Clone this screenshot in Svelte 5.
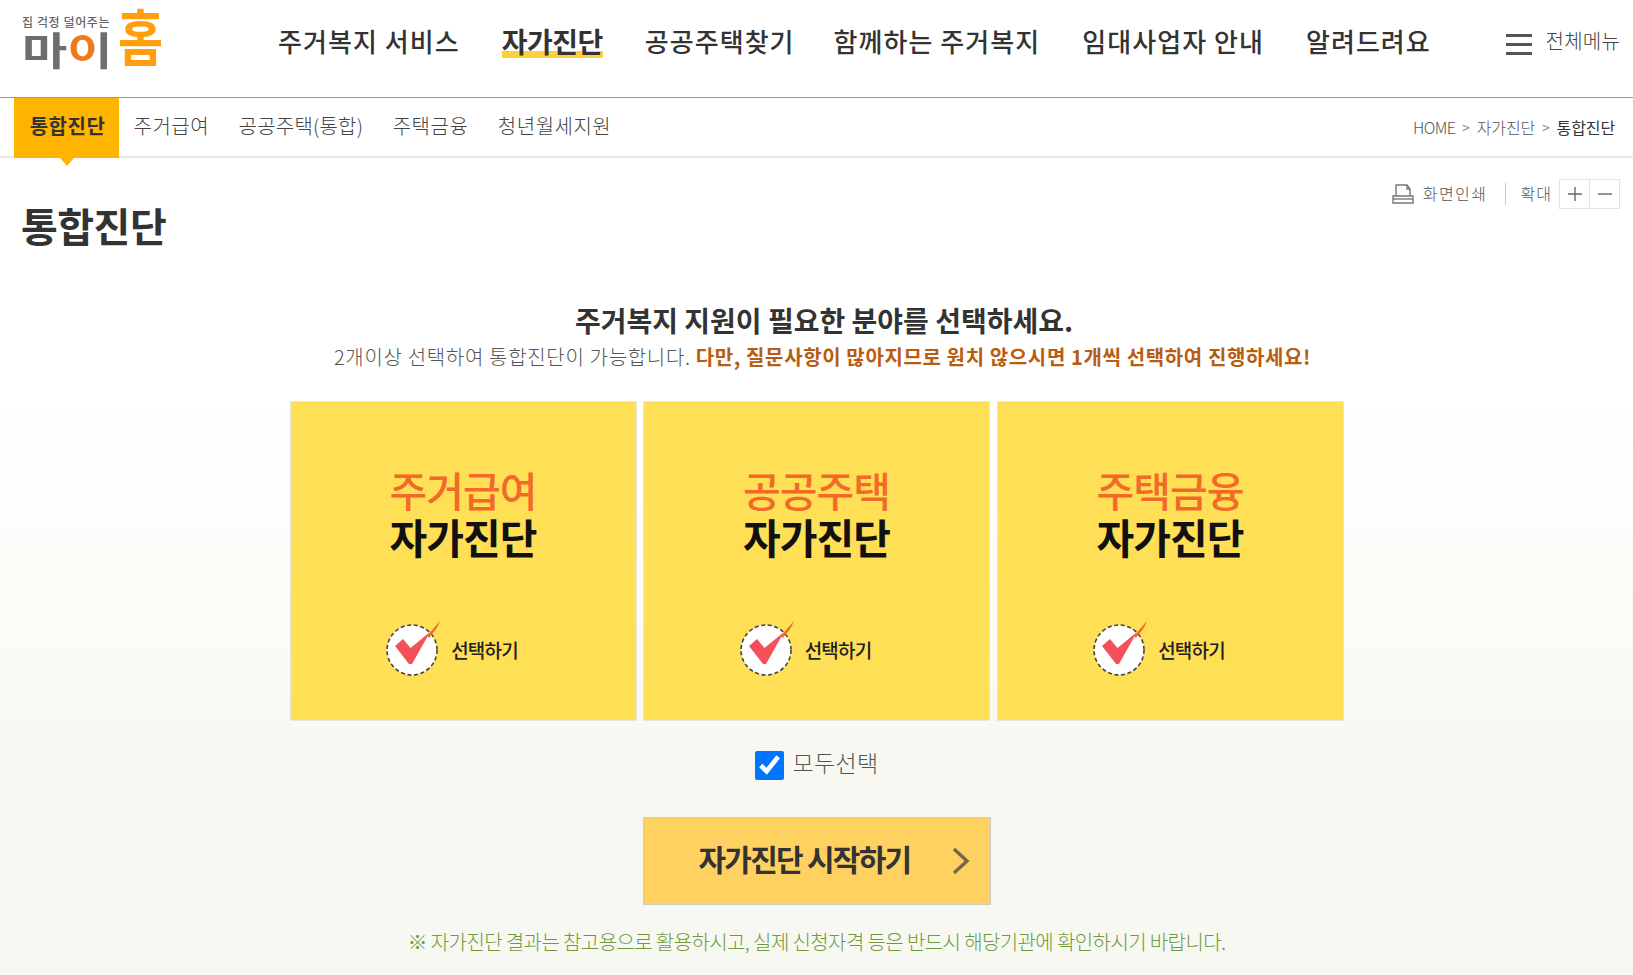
<script lang="ts">
  const mainNav = ['주거복지 서비스', '자가진단', '공공주택찾기', '함께하는 주거복지', '임대사업자 안내', '알려드려요'];
  const subNav = ['통합진단', '주거급여', '공공주택(통합)', '주택금융', '청년월세지원'];
  const cards = ['주거급여', '공공주택', '주택금융'];
</script>

<header class="top">
  <a class="logo" href="#top">
    <span class="logo-left">
      <span class="slogan">집 걱정 덜어주는</span>
      <span class="my">마<span class="ring">이</span></span>
    </span>
    <span class="home">홈</span>
  </a>
  <nav class="gnb">
    {#each mainNav as item, i}
      <a href="#top" class:on={i === 1}>{item}</a>
    {/each}
  </nav>
  <div class="all">
    <span class="burger"><i></i><i></i><i></i></span>
    <span>전체메뉴</span>
  </div>
</header>

<div class="subbar">
  <nav class="lnb">
    {#each subNav as item, i}
      <a href="#top" class:active={i === 0}>{item}</a>
    {/each}
  </nav>
  <div class="crumbs">
    <span class="en">HOME</span><span class="sep">&gt;</span><span>자가진단</span><span class="sep">&gt;</span><b>통합진단</b>
  </div>
</div>

<main>
  <div class="head">
    <h1>통합진단</h1>
    <div class="tools">
      <svg width="22" height="20" viewBox="0 0 22 20" fill="none" stroke="#777" stroke-width="1.4">
        <path d="M4 12V1h11l3 4v7" />
        <path d="M15 1v4h3" />
        <path d="M1 12h20v7H1z" />
        <path d="M1 15h20" />
      </svg>
      <span class="print">화면인쇄</span>
      <span class="bar"></span>
      <span class="zoom-label">확대</span>
      <span class="zoom-btns">
        <button aria-label="확대">
          <svg width="16" height="16" viewBox="0 0 16 16" stroke="#666" stroke-width="1.4"><path d="M8 1v14M1 8h14" /></svg>
        </button>
        <button aria-label="축소">
          <svg width="16" height="16" viewBox="0 0 16 16" stroke="#666" stroke-width="1.4"><path d="M1 8h14" /></svg>
        </button>
      </span>
    </div>
  </div>

  <section class="intro">
    <h2>주거복지 지원이 필요한 분야를 선택하세요.</h2>
    <p>2개이상 선택하여 통합진단이 가능합니다. <strong>다만, 질문사항이 많아지므로 원치 않으시면 1개씩 선택하여 진행하세요!</strong></p>
  </section>

  <div class="cards">
    {#each cards as name}
      <div class="card">
        <div class="card-title">
          <span class="orange">{name}</span>
          <span class="black">자가진단</span>
        </div>
        <div class="pick">
          <svg width="54" height="58" viewBox="0 0 54 58">
            <circle cx="26" cy="31" r="25" fill="#fff" stroke="#444" stroke-width="1.6" stroke-dasharray="4 2.6" />
            <g class="tick">
              <path d="M9 27l8-7 7.500 9L44 13 26 45h-3z" fill="#f4505a" />
              <path d="M41 17L54 2q-3 8-8 13l-3 4z" fill="#f26a1f" />
            </g>
          </svg>
          <span class="pick-label">선택하기</span>
        </div>
      </div>
    {/each}
  </div>

  <label class="all-check">
    <input type="checkbox" checked />
    <span>모두선택</span>
  </label>

  <button class="start">
    <span class="start-label">자가진단 시작하기</span>
    <svg width="18" height="28" viewBox="0 0 18 28" fill="none" stroke="#77664a" stroke-width="3.4"><path d="M2 2l13 12L2 26" /></svg>
  </button>

  <p class="note">※ 자가진단 결과는 참고용으로 활용하시고, 실제 신청자격 등은 반드시 해당기관에 확인하시기 바랍니다.</p>
</main>

<style>
  :global(body) {
    margin: 0;
    background: linear-gradient(#fff 400px, #f8f8f2 760px);
    min-height: 975px;
    overflow: hidden;
    font-family: "Noto Sans CJK KR", "Noto Sans", sans-serif;
    color: #333;
  }
  a {
    color: inherit;
    text-decoration: none;
  }
  .top {
    height: 97px;
    display: flex;
    align-items: flex-start;
    border-bottom: 1px solid #999;
    box-sizing: content-box;
  }
  .logo {
    display: flex;
    margin-left: 22px;
    width: 240px;
    height: 97px;
  }
  .logo-left {
    display: flex;
    flex-direction: column;
    padding-top: 15px;
  }
  .slogan {
    font-size: 12px;
    line-height: 14px;
    font-weight: 500;
    color: #666;
    letter-spacing: 0.6px;
    white-space: nowrap;
  }
  .my {
    margin-top: -1px;
    font-size: 39px;
    line-height: 40px;
    font-weight: 700;
    color: #6e6e6e;
    transform: scaleX(1.26);
    transform-origin: 0 50%;
  }
  .ring {
    background: linear-gradient(90deg, #ee7a1b 58%, #6e6e6e 58%);
    -webkit-background-clip: text;
    background-clip: text;
    color: transparent;
  }
  .home {
    font-size: 49px;
    line-height: 72px;
    font-weight: 700;
    color: #ff9f0f;
    margin: -3px 0 0 8px;
    height: 72px;
    transform: scaleY(1.25);
    transform-origin: 50% 40%;
  }
  .gnb {
    display: flex;
    gap: 42px;
    margin-left: 16px;
    padding-top: 21px;
    white-space: nowrap;
  }
  .gnb a {
    font-size: 26px;
    line-height: 40px;
    font-weight: 500;
    color: #333;
    letter-spacing: 1.05px;
  }
  .gnb a.on {
    font-size: 28px;
    font-weight: 700;
    letter-spacing: -0.5px;
    background: linear-gradient(transparent 30px, #fdd13a 30px, #fdd13a 37px, transparent 37px);
  }
  .gnb a:nth-child(3) {
    margin-right: -3px;
  }
  .all {
    display: flex;
    align-items: center;
    gap: 14px;
    margin-left: auto;
    margin-right: 13px;
    padding-top: 21px;
    font-size: 20px;
    line-height: 40px;
    font-weight: 300;
    color: #444;
    letter-spacing: 0.2px;
  }
  .burger {
    display: flex;
    flex-direction: column;
    gap: 6px;
    margin-top: 6px;
  }
  .burger i {
    display: block;
    width: 26px;
    height: 3px;
    background: #555;
  }
  .subbar {
    height: 60px;
    display: flex;
    justify-content: space-between;
    border-bottom: 2px solid #e8e8e8;
    box-sizing: border-box;
    padding: 0 18px 0 14px;
  }
  .lnb {
    display: flex;
    gap: 29.5px;
  }
  .lnb a {
    font-size: 20px;
    line-height: 56px;
    color: #444;
    font-weight: 300;
    letter-spacing: 0.5px;
    white-space: nowrap;
  }
  .lnb a:nth-child(3) {
    letter-spacing: 0.2px;
  }
  .lnb a.active {
    position: relative;
    box-sizing: border-box;
    width: 105px;
    height: 60px;
    margin-right: -15px;
    padding-left: 2px;
    text-align: center;
    background: #ffb400;
    font-weight: 700;
    color: #333;
    letter-spacing: 0.5px;
  }
  .lnb a.active::after {
    content: "";
    position: absolute;
    left: 46px;
    top: 60px;
    border: 7px solid transparent;
    border-top: 8px solid #ffb400;
    border-bottom: 0;
  }
  .crumbs {
    display: flex;
    align-items: center;
    font-size: 16px;
    font-weight: 300;
    color: #555;
    letter-spacing: -0.1px;
    white-space: nowrap;
  }
  .crumbs .en {
    letter-spacing: -0.6px;
  }
  .crumbs .sep {
    margin: 0 7px;
    font-size: 14px;
  }
  .crumbs b {
    font-weight: 400;
    color: #333;
  }
  main {
    display: flex;
    flex-direction: column;
    align-items: center;
  }
  .head {
    align-self: stretch;
    height: 142px;
    display: flex;
    justify-content: space-between;
    align-items: flex-start;
    padding: 0 13px 0 21px;
  }
  h1 {
    margin: 40px 0 0;
    font-size: 40px;
    line-height: 54px;
    font-weight: 700;
    letter-spacing: -0.5px;
    color: #333;
  }
  .tools {
    display: flex;
    align-items: center;
    margin-top: 21px;
    font-size: 16px;
    font-weight: 300;
    color: #555;
  }
  .print {
    margin: 0 0 2px 9px;
    letter-spacing: 1.5px;
  }
  .bar {
    width: 1px;
    height: 22px;
    background: #ccc;
    margin: 0 15px 0 17px;
  }
  .zoom-label {
    margin: 0 7px 2px 0;
    letter-spacing: 1px;
  }
  .zoom-btns {
    display: flex;
  }
  .zoom-btns button {
    width: 31px;
    height: 30px;
    display: flex;
    align-items: center;
    justify-content: center;
    padding: 0;
    background: none;
    border: 1px solid #e2e2e2;
  }
  .zoom-btns button + button {
    margin-left: -1px;
  }
  .intro {
    padding-left: 12px;
    text-align: center;
  }
  h2 {
    margin: 0;
    padding-left: 3px;
    font-size: 28px;
    line-height: 40px;
    font-weight: 700;
    letter-spacing: 0;
    color: #333;
  }
  .intro p {
    margin: 1px 0 0;
    font-size: 20px;
    line-height: 32px;
    font-weight: 300;
    color: #555;
    letter-spacing: 0.68px;
  }
  .intro strong {
    font-weight: 700;
    color: #b85c10;
    letter-spacing: 0.62px;
  }
  .cards {
    display: flex;
    gap: 6.5px;
    margin-top: 28px;
  }
  .card {
    width: 347px;
    height: 320px;
    box-sizing: border-box;
    border: 1px solid #e6e6df;
    background: #ffdf55;
    display: flex;
    flex-direction: column;
    align-items: center;
  }
  .card-title {
    display: flex;
    flex-direction: column;
    align-items: center;
    margin-top: 64px;
    font-size: 41px;
    line-height: 47px;
    letter-spacing: -1px;
  }
  .orange {
    color: #f2692a;
    font-weight: 500;
  }
  .black {
    color: #111;
    font-weight: 700;
  }
  .pick {
    display: flex;
    align-items: center;
    gap: 11px;
    margin-top: 59px;
    margin-right: 22px;
    font-size: 19px;
    font-weight: 500;
    letter-spacing: -0.8px;
    color: #222;
  }
  .pick-label {
    padding-top: 2px;
  }
  .tick {
    filter: blur(0.4px);
  }
  .all-check {
    display: flex;
    align-items: center;
    gap: 9px;
    margin-top: 23px;
    font-size: 23px;
    line-height: 36px;
    font-weight: 300;
    color: #555;
    letter-spacing: 0.3px;
  }
  .all-check input {
    width: 29px;
    height: 29px;
    margin: 6px 0 0;
    accent-color: #0075ff;
  }
  .start {
    width: 348px;
    height: 88px;
    margin-top: 37px;
    display: flex;
    align-items: center;
    justify-content: space-between;
    box-sizing: border-box;
    padding: 0 20px 0 55px;
    background: #ffd160;
    border: 1px solid #ccc;
    font-family: inherit;
    font-size: 30px;
    font-weight: 700;
    color: #333;
    letter-spacing: -1.75px;
    white-space: nowrap;
  }
  .start-label {
    padding-bottom: 6px;
  }
  .note {
    margin: 19px 0 0;
    font-size: 20px;
    line-height: 36px;
    font-weight: 300;
    color: #6f9a3c;
    letter-spacing: -0.6px;
    white-space: nowrap;
  }
</style>
